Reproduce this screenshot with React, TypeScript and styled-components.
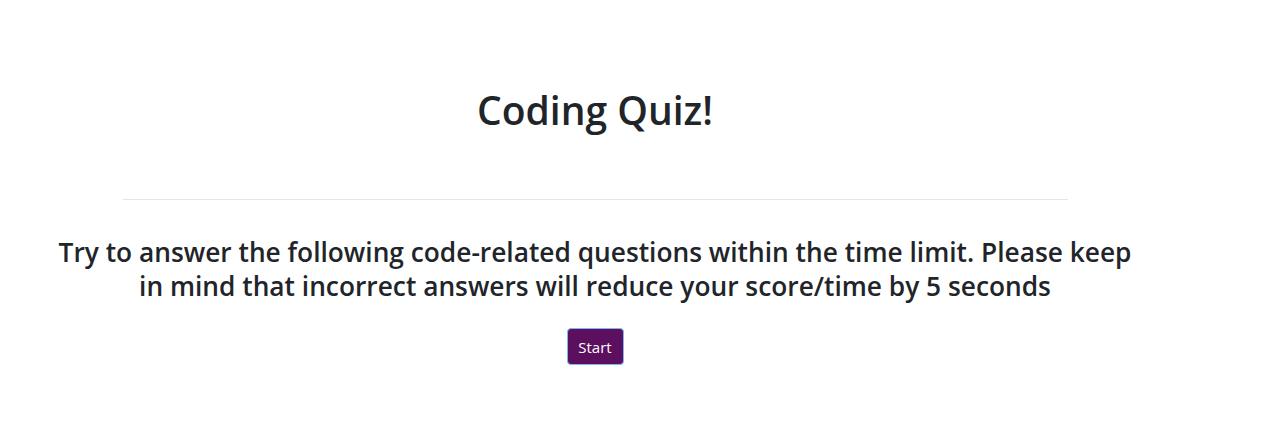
import styled, { createGlobalStyle } from "styled-components";

const GlobalStyle = createGlobalStyle`
  body {
    margin: 0;
    background: #ffffff;
    font-family: "Open Sans", "Noto Sans", sans-serif;
    color: #212529;
  }
`;

const App = () => {
  return (
    <>
      <GlobalStyle />
      <Page>
        <Header>
          <Title>Coding Quiz!</Title>
        </Header>
        <Divider />
        <Intro>
          Try to answer the following code-related questions within the time
          limit. Please keep in mind that incorrect answers will reduce your
          score/time by 5 seconds
        </Intro>
        <StartButton>Start</StartButton>
      </Page>
    </>
  );
};

export default App;

const Page = styled.main`
  width: 1190px;
  display: flex;
  flex-direction: column;
  align-items: center;
  padding-top: 86px;
`;

const Header = styled.header`
  display: flex;
  justify-content: center;
`;

const Title = styled.h1`
  margin: 0;
  font-size: 39px;
  font-weight: 600;
  line-height: 48px;
  color: #212529;
`;

const Divider = styled.hr`
  width: 945px;
  margin: 65px 0 35px;
  border: 0;
  border-top: 1px solid #e5e5e5;
`;

const Intro = styled.h3`
  margin: 0;
  width: 1100px;
  text-align: center;
  font-size: 26.3px;
  font-weight: 600;
  line-height: 34px;
  color: #212529;
`;

const StartButton = styled.button`
  margin-top: 25px;
  width: 57px;
  height: 37px;
  padding: 0;
  background: #5c0f5e;
  border: 1px solid #7ab8f0;
  border-radius: 4px;
  color: #ffffff;
  font-family: "Open Sans", "Noto Sans", sans-serif;
  font-size: 15px;
  cursor: pointer;
`;
